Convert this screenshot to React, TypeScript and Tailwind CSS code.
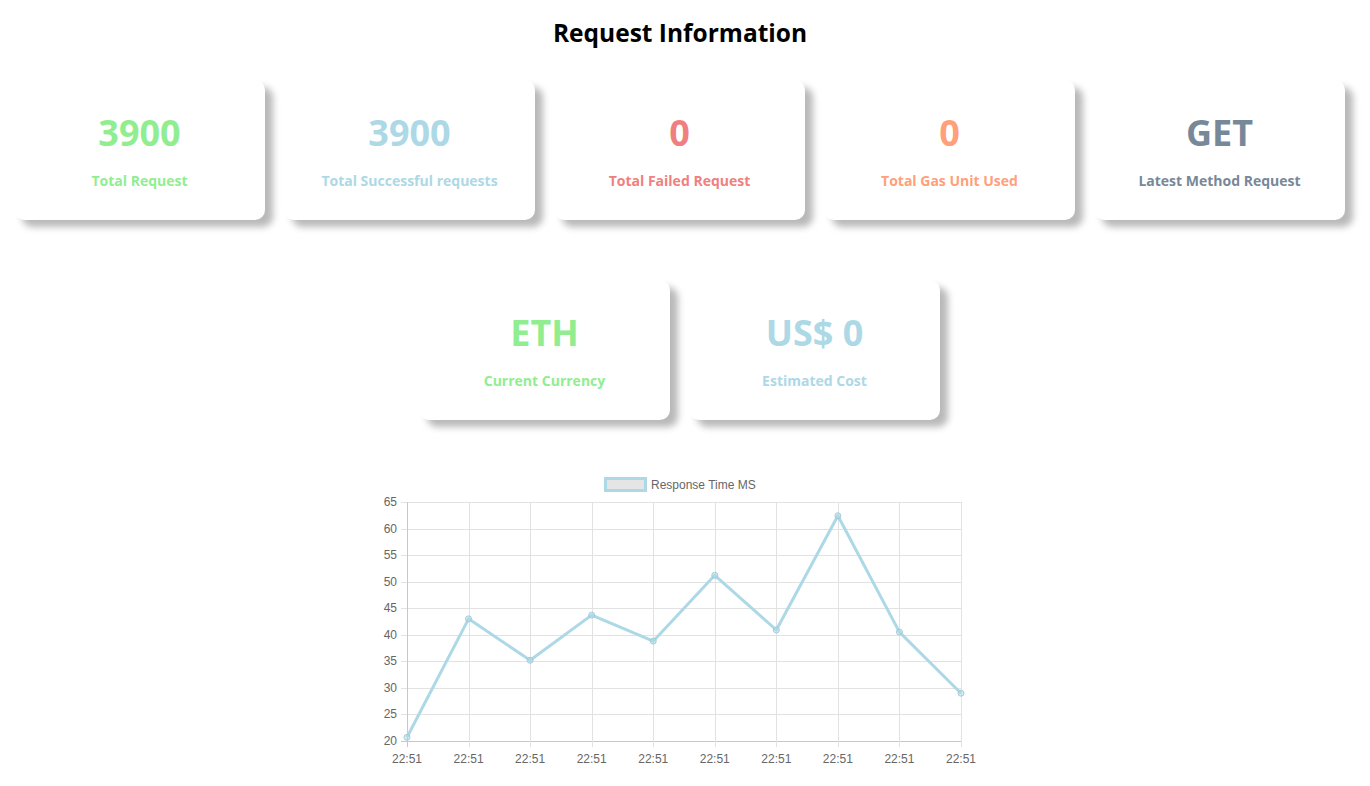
import React from 'react';

interface StatCard {
  value: string;
  label: string;
  color: string;
}

const topCards: StatCard[] = [
  { value: '3900', label: 'Total Request', color: 'text-[#90ee90]' },
  { value: '3900', label: 'Total Successful requests', color: 'text-[#add8e6]' },
  { value: '0', label: 'Total Failed Request', color: 'text-[#f08080]' },
  { value: '0', label: 'Total Gas Unit Used', color: 'text-[#ffa07a]' },
  { value: 'GET', label: 'Latest Method Request', color: 'text-[#778899]' },
];

const bottomCards: StatCard[] = [
  { value: 'ETH', label: 'Current Currency', color: 'text-[#90ee90]' },
  { value: 'US$ 0', label: 'Estimated Cost', color: 'text-[#add8e6]' },
];

const data = [20.7, 43, 35.2, 43.7, 38.8, 51.2, 40.9, 62.4, 40.5, 29];

const Card: React.FC<{ card: StatCard }> = ({ card }) => (
  <div className="w-[251px] h-[140px] pt-[2px] bg-white rounded-[10px] shadow-[8px_7px_7px_rgba(0,0,0,0.28)] flex flex-col items-center justify-center">
    <div className={`text-[36px] leading-none font-bold ${card.color}`}>{card.value}</div>
    <div className={`mt-[23px] text-[14px] leading-none font-bold ${card.color}`}>{card.label}</div>
  </div>
);

const Chart: React.FC = () => {
  const left = 32;
  const right = 586;
  const top = 32;
  const bottom = 271;
  const yFor = (v: number) => bottom - ((v - 20) / 45) * (bottom - top);
  const step = (right - left) / (data.length - 1);
  const pts = data.map((v, i) => [left + i * step, yFor(v)]);
  const ticks = [20, 25, 30, 35, 40, 45, 50, 55, 60, 65];
  return (
    <svg width="620" height="300" viewBox="0 0 620 300" className="block" style={{ fontFamily: '"Liberation Sans", Arial, sans-serif' }}>
      {/* legend */}
      <rect x="230.5" y="8.5" width="40" height="12" fill="#e5e5e5" stroke="#add8e6" strokeWidth="3" />
      <text x="276" y="18.5" fontSize="12" fill="#666">Response Time MS</text>
      {/* horizontal grid */}
      {ticks.map((t) => (
        <g key={t}>
          <line x1={left - 6} x2={right} y1={Math.round(yFor(t)) + 0.5} y2={Math.round(yFor(t)) + 0.5} stroke={t === 20 ? '#c8c8c8' : '#e2e2e2'} />
          <text x={left - 10} y={yFor(t) + 4} fontSize="12" fill="#666" textAnchor="end">{t}</text>
        </g>
      ))}
      {/* vertical grid */}
      {pts.map(([x], i) => (
        <g key={i}>
          <line x1={Math.round(x) + 0.5} x2={Math.round(x) + 0.5} y1={top} y2={bottom + 6} stroke={i === 0 ? '#c8c8c8' : '#e2e2e2'} />
          <text x={x} y={293} fontSize="12" fill="#666" textAnchor="middle">22:51</text>
        </g>
      ))}
      <polyline points={pts.map((p) => p.join(',')).join(' ')} fill="none" stroke="#add8e6" strokeWidth="3" strokeLinejoin="round" />
      {pts.map(([x, y], i) => (
        <circle key={i} cx={x} cy={y} r="3" fill="rgba(173,216,230,0.5)" stroke="#a4ccd9" strokeWidth="1" />
      ))}
    </svg>
  );
};

export default function App() {
  return (
    <div className="min-h-screen bg-white font-['Open_Sans',sans-serif]">
      <h1 className="pt-[17px] pr-[10px] text-center text-[24.5px] leading-[32px] font-bold text-black">Request Information</h1>
      <div className="w-[1331px] ml-[14px]">
        <div className="mt-[31px] flex gap-[19px]">
          {topCards.map((c, i) => (
            <Card key={i} card={c} />
          ))}
        </div>
        <div className="mt-[60px] flex justify-center gap-[19px]">
          {bottomCards.map((c, i) => (
            <Card key={i} card={c} />
          ))}
        </div>
      </div>
      <div className="mt-[50px] flex justify-center">
        <Chart />
      </div>
    </div>
  );
}
